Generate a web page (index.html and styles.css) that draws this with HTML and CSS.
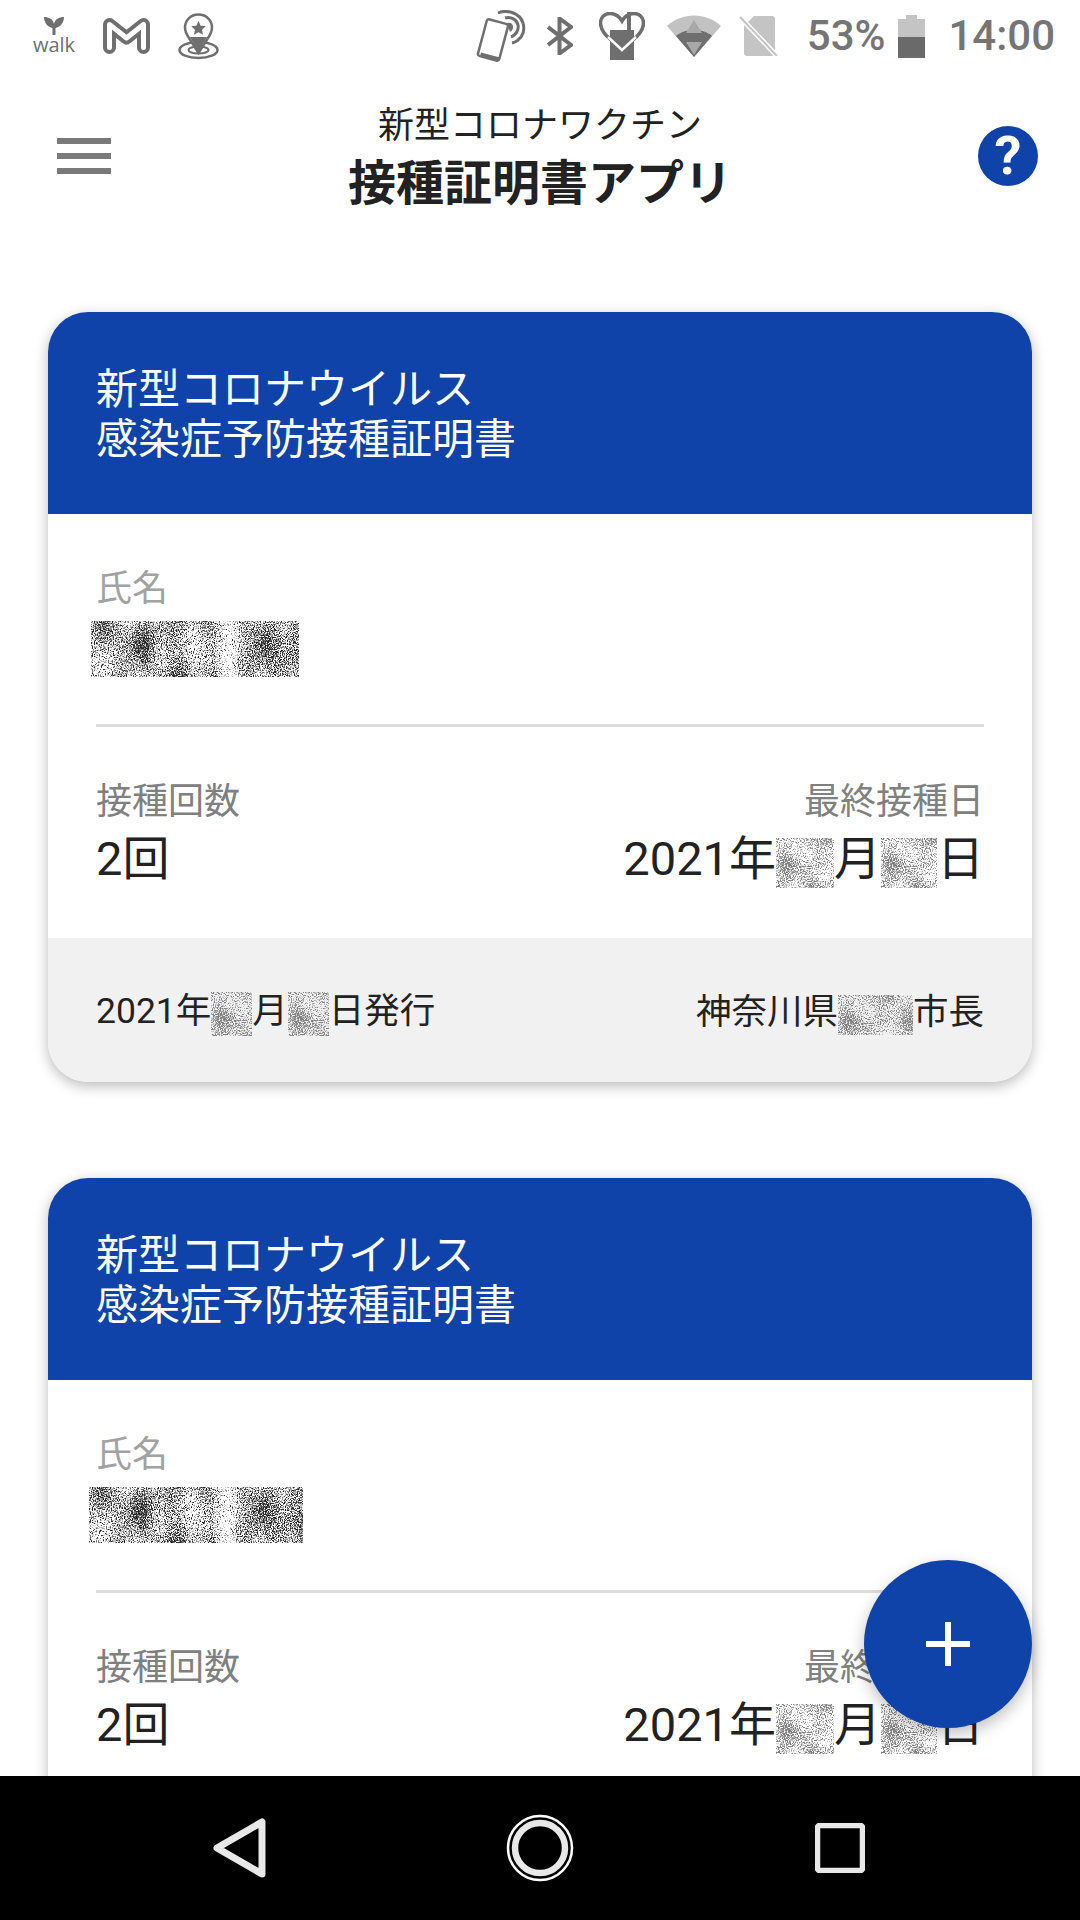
FILE: index.html
```html
<!DOCTYPE html>
<html lang="ja">
  <head>
    <meta charset="utf-8">
    <title>接種証明書アプリ</title>
    <link rel="stylesheet" href="styles.css">
  </head>
  <body>
    <!-- speckle used for the hidden parts of the certificate -->
    <svg class="defs" width="0" height="0">
      <filter id="speckle-dark" x="0" y="0" width="100%" height="100%" color-interpolation-filters="sRGB">
        <feTurbulence type="fractalNoise" baseFrequency="0.85" numOctaves="2" seed="4" result="fine"/>
        <feTurbulence type="fractalNoise" baseFrequency="0.04 0.02" numOctaves="1" seed="7" result="wide"/>
        <feComposite in="fine" in2="wide" operator="arithmetic" k2="1" k3="0.55" k4="-0.1"/>
        <feColorMatrix type="matrix" values="0 0 0 0 0.15  0 0 0 0 0.15  0 0 0 0 0.15  6 0 0 0 -2.3"/>
      </filter>
      <filter id="speckle-light" x="0" y="0" width="100%" height="100%" color-interpolation-filters="sRGB">
        <feTurbulence type="fractalNoise" baseFrequency="0.85" numOctaves="2" seed="12" result="fine"/>
        <feTurbulence type="fractalNoise" baseFrequency="0.05" numOctaves="1" seed="3" result="wide"/>
        <feComposite in="fine" in2="wide" operator="arithmetic" k2="1" k3="0.4" k4="-0.1"/>
        <feColorMatrix type="matrix" values="0 0 0 0 0.5  0 0 0 0 0.5  0 0 0 0 0.5  6 0 0 0 -2.3"/>
      </filter>
    </svg>

    <div class="status-bar">
      <div class="status-group">
        <div class="walk">
          <svg width="24" height="18" viewBox="0 0 24 18">
            <path d="M10.5 18V11C6 10 2 6 2 0 7 0 11 2 12 7 13 2 17 0 22 0 22 6 18 10 13.5 11V18Z" fill="#6f6f6f"/>
          </svg>
          <span>walk</span>
        </div>
        <svg class="icon-m" width="47" height="36" viewBox="0 0 47 36">
          <path d="M6.5 29.5V6.5L23.5 20 40.5 6.5V29.5" fill="none" stroke="#6f6f6f" stroke-width="13" stroke-linejoin="round" stroke-linecap="round"/>
          <path d="M6.5 29.5V6.5L23.5 20 40.5 6.5V29.5" fill="none" stroke="#fff" stroke-width="5" stroke-linejoin="round" stroke-linecap="round"/>
        </svg>
        <svg class="icon-pin" width="41" height="47" viewBox="0 0 41 47">
          <ellipse cx="20.5" cy="37" rx="19" ry="8" fill="none" stroke="#6f6f6f" stroke-width="2.5"/>
          <ellipse cx="20.5" cy="37" rx="10" ry="3.5" fill="none" stroke="#6f6f6f" stroke-width="2"/>
          <path d="M20.5 1.5C12 1.5 7 8 7 14.5 7 19 9 22 11 25L20.5 40 30 25C32 22 34 19 34 14.5 34 8 29 1.5 20.5 1.5Z" fill="#fff" stroke="#6f6f6f" stroke-width="2.5"/>
          <path d="M12 24H29L20.5 39Z" fill="#6f6f6f"/>
          <path d="M20.5 8L22.7 12.8 27.8 13.3 24 16.7 25 21.8 20.5 19.2 16 21.8 17 16.7 13.2 13.3 18.3 12.8Z" fill="#6f6f6f"/>
        </svg>
      </div>
      <div class="status-group">
        <svg class="icon-nfc" width="51" height="52" viewBox="0 0 51 52">
          <rect x="6" y="11" width="22" height="38" rx="2.5" transform="rotate(15 17 30)" fill="#fff" stroke="#6f6f6f" stroke-width="2.5"/>
          <path d="M5 42.5L24 47.5 23 51 4 46Z" fill="#6f6f6f"/>
          <path d="M22 3C31 -1 44 3 47 13 50 23 44 31 36 33M29 8C35 6 41 10 42 15 43 20 40 25 35 27" fill="none" stroke="#6f6f6f" stroke-width="3"/>
          <path d="M31 13C35 12 37 14 37 17 37 19 36 21 34 22Z" fill="#6f6f6f"/>
        </svg>
        <svg class="icon-bt" width="26" height="38" viewBox="0 0 26 38">
          <path d="M1 10L24 28 12.5 36.5V1.5L24 10 1 28" fill="none" stroke="#6f6f6f" stroke-width="4"/>
        </svg>
        <svg class="icon-heart" width="46" height="48" viewBox="0 0 46 48">
          <path d="M12 28C6 23 1.5 17 1.5 11 1.5 5 6 1.5 11 1.5 16 1.5 20 4 23 9 26 4 30 1.5 35 1.5 40 1.5 44.5 5 44.5 11 44.5 17 40 23 34 28" fill="none" stroke="#6f6f6f" stroke-width="3.5"/>
          <path d="M11 18H35V48H11Z" fill="#6f6f6f"/>
          <path d="M28 0H32V20H28Z" fill="#6f6f6f"/>
          <path d="M9 25L23 38 37 25" fill="none" stroke="#fff" stroke-width="2.5"/>
        </svg>
        <svg class="icon-wifi" width="54" height="42" viewBox="0 0 54 42">
          <path d="M0 11C15 -3 39 -3 54 11L27 42Z" fill="#c2c2c2"/>
          <path d="M9 21C18 13 36 13 45 21L27 42Z" fill="#6f6f6f"/>
          <path d="M27 5L35 18H19ZM27 40L19 27H35Z" fill="#a8a8a8"/>
        </svg>
        <svg class="icon-sim" width="40" height="40" viewBox="0 0 40 40">
          <path d="M15 0H33C35 0 36 1 36 3V37C36 39 35 40 33 40H8C6 40 5 39 5 37V10Z" fill="#c4c4c4"/>
          <path d="M1 1L38 40" stroke="#fff" stroke-width="5"/>
          <path d="M1 1L38 40" stroke="#c4c4c4" stroke-width="2"/>
        </svg>
        <span class="status-text battery-text">53%</span>
        <svg class="icon-battery" width="27" height="43" viewBox="0 0 27 43">
          <path d="M8 0H19V4H27V43H0V4H8Z" fill="#c4c4c4"/>
          <path d="M0 22H27V43H0Z" fill="#6a6a6a"/>
        </svg>
        <span class="status-text clock">14:00</span>
      </div>
    </div>

    <header class="app-header">
      <div class="menu-btn"><span></span><span></span><span></span></div>
      <div class="app-title">
        <div class="title-sub">新型コロナワクチン</div>
        <div class="title-main">接種証明書アプリ</div>
      </div>
      <div class="help-btn">?</div>
    </header>

    <main class="cert-list">
      <section class="card">
        <h2 class="card-head">新型コロナウイルス<br>感染症予防接種証明書</h2>
        <div class="card-name">
          <div class="label label-light">氏名</div>
          <svg class="blot blot-name"><rect width="100%" height="100%" filter="url(#speckle-dark)"/></svg>
        </div>
        <div class="card-stats">
          <div>
            <div class="label">接種回数</div>
            <div class="value">2回</div>
          </div>
          <div class="stat-right">
            <div class="label">最終接種日</div>
            <div class="value">2021年<svg class="blot blot-month"><rect width="100%" height="100%" filter="url(#speckle-light)"/></svg>月<svg class="blot blot-day"><rect width="100%" height="100%" filter="url(#speckle-light)"/></svg>日</div>
          </div>
        </div>
        <div class="card-foot">
          <div>2021年<svg class="blot blot-small"><rect width="100%" height="100%" filter="url(#speckle-light)"/></svg>月<svg class="blot blot-small"><rect width="100%" height="100%" filter="url(#speckle-light)"/></svg>日発行</div>
          <div>神奈川県<svg class="blot blot-city"><rect width="100%" height="100%" filter="url(#speckle-light)"/></svg>市長</div>
        </div>
      </section>

      <!-- second card runs under the nav bar, its footer is never seen -->
      <section class="card card-cut">
        <h2 class="card-head">新型コロナウイルス<br>感染症予防接種証明書</h2>
        <div class="card-name">
          <div class="label label-light">氏名</div>
          <svg class="blot blot-name blot-name-wide"><rect width="100%" height="100%" filter="url(#speckle-dark)"/></svg>
        </div>
        <div class="card-stats">
          <div>
            <div class="label">接種回数</div>
            <div class="value">2回</div>
          </div>
          <div class="stat-right">
            <div class="label">最終接種日</div>
            <div class="value">2021年<svg class="blot blot-month"><rect width="100%" height="100%" filter="url(#speckle-light)"/></svg>月<svg class="blot blot-day"><rect width="100%" height="100%" filter="url(#speckle-light)"/></svg>日</div>
          </div>
        </div>
      </section>
    </main>

    <div class="fab">
      <svg width="44" height="44" viewBox="0 0 44 44">
        <path d="M19 0H25V19H44V25H25V44H19V25H0V19H19Z" fill="#fff"/>
      </svg>
    </div>

    <nav class="nav-bar">
      <svg width="54" height="60" viewBox="0 0 54 60">
        <path d="M4 30L49 4V56Z" fill="none" stroke="#e8e8e8" stroke-width="7" stroke-linejoin="round"/>
      </svg>
      <svg width="68" height="68" viewBox="0 0 68 68">
        <circle cx="34" cy="34" r="32" fill="none" stroke="#fff" stroke-width="2.5"/>
        <circle cx="34" cy="34" r="25" fill="none" stroke="#e8e8e8" stroke-width="6.5"/>
      </svg>
      <svg width="50" height="50" viewBox="0 0 50 50">
        <rect x="2.5" y="2.5" width="45" height="45" rx="2" fill="none" stroke="#e8e8e8" stroke-width="5.5"/>
      </svg>
    </nav>
  </body>
</html>
```

FILE: styles.css
```css
html, body {
  margin: 0;
  height: 100%;
}
body {
  position: relative;
  display: flex;
  flex-direction: column;
  height: 1920px;
  overflow: hidden;
  background-color: #fff;
  font-family: Roboto, "Noto Sans CJK JP", sans-serif;
  color: #222;
}
.defs {
  position: absolute;
}

/* status bar */
.status-bar {
  display: flex;
  justify-content: space-between;
  align-items: center;
  flex: none;
  height: 72px;
  padding: 0 25px 0 33px;
}
.status-group {
  display: flex;
  align-items: center;
}
.walk {
  display: flex;
  flex-direction: column;
  align-items: center;
  width: 42px;
  color: #6f6f6f;
  font-family: "Open Sans", sans-serif;
  font-size: 20px;
  line-height: 20px;
}
.walk svg {
  display: block;
}
.icon-m, .icon-pin {
  margin-left: 28px;
}
.icon-bt {
  margin-left: 20px;
}
.icon-heart {
  margin-left: 26px;
}
.icon-wifi {
  margin-left: 22px;
}
.icon-sim {
  margin-left: 18px;
}
.status-text {
  color: #757575;
  font-size: 42px;
  font-weight: 500;
  line-height: 50px;
}
.battery-text {
  margin-left: 28px;
}
.icon-battery {
  margin-left: 13px;
}
.clock {
  margin-left: 23px;
}

/* app header */
.app-header {
  display: grid;
  grid-template-columns: 1fr auto 1fr;
  align-items: center;
  flex: none;
  height: 168px;
  padding: 0 42px;
}
.menu-btn {
  display: flex;
  flex-direction: column;
  gap: 9px;
  width: 54px;
  margin-left: 15px;
}
.menu-btn span {
  height: 6px;
  background-color: #7a7a7a;
}
.app-title {
  padding-top: 7px;
  text-align: center;
}
.title-sub {
  font-size: 36px;
  line-height: 49px;
}
.title-main {
  font-size: 48px;
  font-weight: 700;
  line-height: 66px;
}
.help-btn {
  justify-self: end;
  width: 60px;
  height: 60px;
  border-radius: 50%;
  background-color: #1043a9;
  color: #fff;
  font-size: 54px;
  font-weight: 700;
  line-height: 60px;
  text-align: center;
}

/* certificates */
.cert-list {
  flex: 1;
  min-height: 0;
  overflow: hidden;
  padding: 72px 48px 0;
}
.card {
  margin-bottom: 96px;
  border-radius: 40px;
  background-color: #fff;
  box-shadow: 0 4px 14px rgba(0, 0, 0, 0.28);
  overflow: hidden;
}
.card-cut {
  border-radius: 40px 40px 0 0;
}
.card-head {
  margin: 0;
  padding: 53px 48px 49px;
  background-color: #1043a9;
  color: #fff;
  font-size: 42px;
  font-weight: 400;
  line-height: 50px;
}
.card-name {
  margin: 0 48px;
  padding: 50px 0 47px;
  border-bottom: 3px solid #ddd;
}
.label {
  color: #808080;
  font-size: 36px;
  line-height: 50px;
}
.label-light {
  color: #a2a2a2;
}
.blot {
  display: inline-block;
  vertical-align: middle;
}
.blot-name {
  display: block;
  width: 208px;
  height: 56px;
  margin: 7px 0 0 -5px;
}
.blot-name-wide {
  width: 214px;
  margin-left: -7px;
}
.blot-month {
  width: 58px;
  height: 50px;
}
.blot-day {
  width: 56px;
  height: 50px;
}
.blot-small {
  width: 41px;
  height: 44px;
}
.blot-city {
  width: 75px;
  height: 40px;
}
.card-stats {
  display: flex;
  justify-content: space-between;
  padding: 50px 48px 48px;
}
.stat-right {
  text-align: right;
}
.value {
  font-size: 47px;
  line-height: 63px;
}
.card-foot {
  display: flex;
  justify-content: space-between;
  align-items: center;
  height: 142px;
  padding: 0 48px 2px;
  background-color: #f1f1f1;
  font-size: 35.5px;
}

/* floating button */
.fab {
  position: absolute;
  right: 48px;
  top: 1560px;
  display: flex;
  justify-content: center;
  align-items: center;
  width: 168px;
  height: 168px;
  border-radius: 50%;
  background-color: #1043a9;
  box-shadow: 0 6px 16px rgba(0, 0, 0, 0.25);
}

/* android nav bar */
.nav-bar {
  display: grid;
  grid-template-columns: repeat(3, 300px);
  justify-items: center;
  align-items: center;
  flex: none;
  height: 144px;
  padding: 0 90px;
  background-color: #000;
}
```
